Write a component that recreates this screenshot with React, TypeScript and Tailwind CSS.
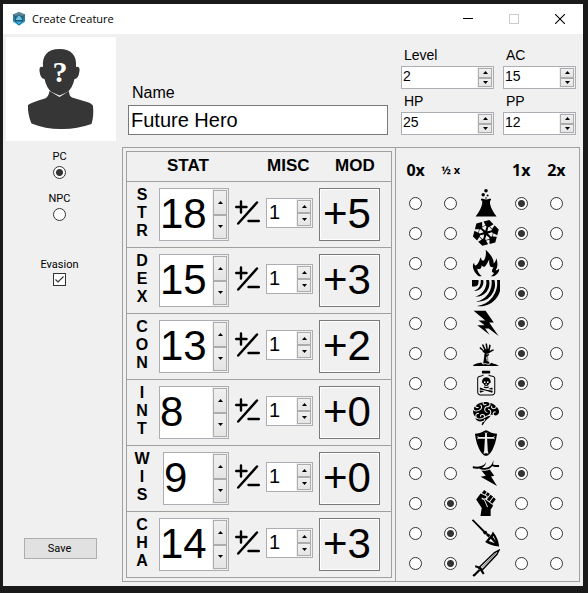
import { useState, type ComponentType, type ReactNode } from 'react'
import {
  GiSnowflake1,
  GiFlame,
  GiPowerLightning,
  GiRaiseZombie,
  GiPoisonBottle,
  GiBrain,
  GiTemplarShield,
  GiLightningStorm,
  GiFist,
} from 'react-icons/gi'

type IconType = ComponentType<{ className?: string }>

function AcidIcon({ className }: { className?: string }) {
  return (
    <svg viewBox="0 0 28 28" className={className} fill="currentColor">
      <circle cx="14" cy="1.8" r="1.8" />
      <circle cx="11.2" cy="5.8" r="1.7" />
      <circle cx="15.6" cy="6.4" r="1" />
      <circle cx="14" cy="9" r="0.8" />
      <path d="M9 9.8h2.2q3 1.6 6 0H19v1.6h-1v3.4c.8 4.4 3.6 8.6 6.6 12.8H3.6C6.6 23.4 9.4 19.2 10.2 14.8V11.4H9z" />
    </svg>
  )
}

function ForceIcon({ className }: { className?: string }) {
  return (
    <svg viewBox="0 0 28 28" className={className} fill="currentColor">
      <path d="M0 1h6.500v2q0 4-3.500 4.500H0z" />
      <path d="M11.200 1A9 9 0 0 1 2 12A10 10 0 0 0 8.800 1z" />
      <path d="M17 1A13 13 0 0 1 3 17.500A14.500 14.500 0 0 0 14.200 1z" />
      <path d="M22.400 1A17 17 0 0 1 4 22.500A19 19 0 0 0 19.500 1z" />
      <path d="M27.800 1A20.500 20.500 0 0 1 5 27A23 23 0 0 0 25 1z" />
    </svg>
  )
}

function SpearIcon({ className }: { className?: string }) {
  return (
    <svg viewBox="0 0 28 28" className={className} fill="currentColor">
      <path d="M0.500 0.800L12.500 13" stroke="currentColor" strokeWidth="1.800" />
      <circle cx="13.200" cy="13.600" r="1.900" />
      <path d="M15 14l3.500 2-2 2.500-2.500-2.500z" />
      <path d="M20.800 12.500q5.500 6.500 6.400 15-8.500-.8-14-4.500l4.400-5.500q2.500-2 3.200-5z" />
      <path d="M16.800 22l2-2.300 4 4.600zM20.800 18l.6-1.300 2.600 5.500z" fill="#f0f0f0" />
    </svg>
  )
}

function SwordIcon({ className }: { className?: string }) {
  return (
    <svg viewBox="0 0 28 28" className={className} fill="none" stroke="currentColor">
      <path d="M7.500 18L22.500 3.600 27 1.200 24.800 5.500 10.500 20.800z" strokeWidth="1.400" />
      <path d="M10 18.500L24 4.200" strokeWidth="0.600" />
      <path d="M3.200 17.200q3 .5 5 2.800t3.500 5" strokeWidth="2" />
      <path d="M7.500 21L2.500 26" strokeWidth="2.200" />
      <circle cx="2" cy="26.300" r="1.200" fill="currentColor" stroke="none" />
    </svg>
  )
}

function Portrait() {
  return (
    <svg viewBox="0 0 110 104" className="w-full bg-white" role="img" aria-label="Portrait">
      <g fill="#363636">
        <path d="M37 30C36 19 41 12 53.500 12S71 19 70 30q4-1 3.500 4-1 8-5 8-2 9-7 13l-8 3.500-8-3.500q-5-4-7-13-4 0-5-8-.5-5 3.500-4z" />
        <path d="M43.500 54l10 6 9.500-6q0 5 3 6.500l15 4.500q5 1.500 6 4 1 10-1.500 18-16 5.500-31 5-15 0-29-5.500-4-9-3.500-18.500 4-3 17-6.500 3.500-1.500 4.500-7.500z" />
      </g>
      <text
        x="54"
        y="45"
        textAnchor="middle"
        fill="#ffffff"
        className="font-['Liberation_Serif',serif] text-[30px] font-bold"
      >
        ?
      </text>
    </svg>
  )
}

function AppLogo() {
  return (
    <svg viewBox="0 0 14 14" className="size-[14px]">
      <path d="M7 0l6 2.600v6.800L7 13.600 1 9.400V2.600z" fill="#2b7ea3" />
      <path d="M7 0l6 2.600-2.500 2.200h-7L1 2.600z" fill="#5c8797" />
      <path d="M7 3l3.500 5h-7z" fill="#6cc3e4" />
      <path d="M1 9.400l6 4.200 6-4.200-3.500.6h-5z" fill="#35b6e6" />
      <path d="M1.500 2.800l2 2.200 3.500-2 3.500 2 2-2.200M3.500 5v4.500L7 13l3.500-3.500V5M3.500 8.500h7" fill="none" stroke="#1c4a63" strokeWidth="0.7" />
    </svg>
  )
}

function PlusMinus() {
  return (
    <svg
      viewBox="0 0 25 25"
      className="mb-1 size-[25px]"
      fill="none"
      stroke="#000"
      strokeWidth="2.400"
      strokeLinecap="round"
      aria-hidden="true"
    >
      <path d="M1.200 7H11.500M6 1.500v11M3.200 23.500L22 2.500M13.500 21h10.300" />
    </svg>
  )
}

function Arrow({ up = false }: { up?: boolean }) {
  return (
    <svg viewBox="0 0 5 3" className="h-[3px] w-[5px]" aria-hidden="true">
      <path d={up ? 'M2.500 0L5 3H0z' : 'M0 0h5L2.500 3z'} fill="#000" />
    </svg>
  )
}

interface SpinProps {
  id?: string
  label?: string
  initial: number
  size: string
  text: string
}

function Spin({ id, label, initial, size, text }: SpinProps) {
  const [value, setValue] = useState(String(initial))
  const step = (by: number) => setValue(String((parseInt(value, 10) || 0) + by))
  const button =
    'flex w-full flex-1 items-center justify-center border border-[#acacac] bg-linear-to-b from-[#f0f0f0] to-[#e5e5e5]'
  return (
    <div className={`flex border border-[#abadb3] bg-white ${size}`}>
      <input
        id={id}
        aria-label={label}
        inputMode="numeric"
        value={value}
        onChange={(e) => setValue(e.target.value)}
        className={`min-w-0 flex-1 outline-none ${text}`}
      />
      <div className="flex w-4 flex-none flex-col bg-[#f0f0f0] p-px">
        <button type="button" aria-label="Increase" className={button} onClick={() => step(1)}>
          <Arrow up />
        </button>
        <button type="button" aria-label="Decrease" className={button} onClick={() => step(-1)}>
          <Arrow />
        </button>
      </div>
    </div>
  )
}

function Radio({ id, name, label, checked }: { id?: string; name: string; label?: string; checked: boolean }) {
  return (
    <input
      id={id}
      type="radio"
      name={name}
      aria-label={label}
      defaultChecked={checked}
      className="size-[13px] appearance-none rounded-full border border-[#333] bg-white checked:bg-[radial-gradient(circle,#333_3px,#fff_4px)]"
    />
  )
}

function Field({ id, label, children }: { id: string; label: string; children: ReactNode }) {
  return (
    <div>
      <label htmlFor={id} className="block h-[23px] pt-0.5 pl-[3px] text-[14px] leading-5">
        {label}
      </label>
      {children}
    </div>
  )
}

const stats = [
  { name: 'STR', score: 18, mod: '+5' },
  { name: 'DEX', score: 15, mod: '+3' },
  { name: 'CON', score: 13, mod: '+2' },
  { name: 'INT', score: 8, mod: '+0' },
  { name: 'WIS', score: 9, mod: '+0', narrow: true },
  { name: 'CHA', score: 14, mod: '+3' },
]

const factors = ['0x', '½ x', '1x', '2x']

const damage: { name: string; Icon: IconType; factor: string }[] = [
  { name: 'Acid', Icon: AcidIcon, factor: '1x' },
  { name: 'Cold', Icon: GiSnowflake1, factor: '1x' },
  { name: 'Fire', Icon: GiFlame, factor: '1x' },
  { name: 'Force', Icon: ForceIcon, factor: '1x' },
  { name: 'Lightning', Icon: GiPowerLightning, factor: '1x' },
  { name: 'Necrotic', Icon: GiRaiseZombie, factor: '1x' },
  { name: 'Poison', Icon: GiPoisonBottle, factor: '1x' },
  { name: 'Psychic', Icon: GiBrain, factor: '1x' },
  { name: 'Radiant', Icon: GiTemplarShield, factor: '1x' },
  { name: 'Thunder', Icon: GiLightningStorm, factor: '1x' },
  { name: 'Bludgeoning', Icon: GiFist, factor: '½ x' },
  { name: 'Piercing', Icon: SpearIcon, factor: '½ x' },
  { name: 'Slashing', Icon: SwordIcon, factor: '½ x' },
]

function TitleBar() {
  const button = 'flex w-[46px] items-center justify-center'
  return (
    <header className="flex h-[30px] items-stretch bg-white">
      <div className="flex flex-1 items-center gap-[6px] pl-[9px]">
        <AppLogo />
        <h1 className="font-['Open_Sans',sans-serif] text-[11px]">Create Creature</h1>
      </div>
      <button type="button" aria-label="Minimize" className={button}>
        <svg viewBox="0 0 10 10" className="size-[10px]" shapeRendering="crispEdges">
          <path d="M0 4h10v1H0z" />
        </svg>
      </button>
      <button type="button" aria-label="Maximize" disabled className={button}>
        <span className="size-[10px] border border-[#ccc]" />
      </button>
      <button type="button" aria-label="Close" className={button}>
        <svg viewBox="0 0 10 10" className="size-[10px]" stroke="#000" strokeWidth="1.1">
          <path d="M0 0l10 10M10 0L0 10" />
        </svg>
      </button>
    </header>
  )
}

function Sidebar() {
  const label = "font-['Roboto',sans-serif] text-[11px] leading-4"
  return (
    <aside className="flex w-[113px] flex-none flex-col pt-[3px] pl-[3px]">
      <Portrait />
      <div className="flex flex-col items-center pt-2 pr-[3px]">
        <label htmlFor="pc" className={label}>PC</label>
        <div className="flex h-[26px] pt-px">
          <Radio id="pc" name="kind" checked />
        </div>
        <label htmlFor="npc" className={label}>NPC</label>
        <div className="flex h-[50px] pt-px">
          <Radio id="npc" name="kind" checked={false} />
        </div>
        <label htmlFor="evasion" className={label}>Evasion</label>
        <div className="grid">
          <input
            id="evasion"
            type="checkbox"
            defaultChecked
            className="peer col-start-1 row-start-1 size-[13px] appearance-none border border-[#333] bg-white"
          />
          <svg
            viewBox="0 0 13 13"
            className="pointer-events-none invisible col-start-1 row-start-1 size-[13px] peer-checked:visible"
            fill="none"
            stroke="#333"
            strokeWidth="1.2"
            aria-hidden="true"
          >
            <path d="M2.500 6.500L5 9l5.500-5.500" />
          </svg>
        </div>
      </div>
      <button
        type="button"
        className={`mt-auto mb-[27px] ml-[18px] h-[21px] w-[73px] border border-[#adadad] bg-[#e1e1e1] pr-0.5 ${label}`}
      >
        Save
      </button>
    </aside>
  )
}

function StatPanel() {
  return (
    <section className="m-[3px] border border-[#a0a0a0]">
      <div className="flex h-[29px] items-center pb-0.5 text-[17px] font-bold">
        <h2 className="w-[126px] pl-10">STAT</h2>
        <h2 className="w-[72px] pl-[14px]">MISC</h2>
        <h2 className="pl-[10px]">MOD</h2>
      </div>
      {stats.map((s) => (
        <div key={s.name} className="flex h-[66px] items-center gap-[6px] border-t border-[#a0a0a0] pr-[11px]">
          <h3 className="mb-1 -mr-1 flex w-[30px] flex-col items-center text-[16px] leading-[18px] font-bold">
            {s.name.split('').map((c) => (
              <span key={c}>{c}</span>
            ))}
          </h3>
          <div className="flex w-[70px] justify-end">
            <Spin
              label={`${s.name} score`}
              initial={s.score}
              size={s.narrow ? 'h-[53px] w-[66px]' : 'h-[53px] w-[70px]'}
              text="pb-0.5 text-[42px]"
            />
          </div>
          <PlusMinus />
          <Spin label={`${s.name} misc`} initial={1} size="mb-1 h-[30px] w-[47px]" text="pl-0.5 pb-px text-[20px]" />
          <output className="flex h-[53px] w-[61px] items-center border border-[#7a7a7a] pb-0.5 pl-[3px] text-[42px] leading-none outline -outline-offset-2 outline-white">
            {s.mod}
          </output>
        </div>
      ))}
    </section>
  )
}

function DamagePanel() {
  const cell = 'flex items-center justify-center'
  const radio = (name: string, factor: string, current: string) => (
    <div className={cell}>
      <Radio name={name} label={`${name} ${factor}`} checked={factor === current} />
    </div>
  )
  return (
    <section className="flex-1 border-l border-[#a0a0a0] pr-[5px] pl-[2px]">
      <div className="grid h-10 grid-cols-5 pt-1 font-['Open_Sans',sans-serif] text-[16px] font-bold whitespace-nowrap">
        <span className={cell}>{factors[0]}</span>
        <span className={`${cell} text-[11px]`}>{factors[1]}</span>
        <span />
        <span className={cell}>{factors[2]}</span>
        <span className={cell}>{factors[3]}</span>
      </div>
      {damage.map(({ name, Icon, factor }) => (
        <div key={name} className="grid h-[30px] grid-cols-5">
          {radio(name, factors[0], factor)}
          {radio(name, factors[1], factor)}
          <div className={cell}>
            <Icon className="size-7" />
          </div>
          {radio(name, factors[2], factor)}
          {radio(name, factors[3], factor)}
        </div>
      ))}
    </section>
  )
}

export default function App() {
  return (
    <div className="flex min-h-screen flex-col bg-[#1a1a1a] pt-1 pr-[5px] pb-[7px] pl-[3px] font-['Liberation_Sans',Arial,sans-serif] text-black">
      <TitleBar />
      <form className="flex flex-1 bg-[#f0f0f0]" onSubmit={(e) => e.preventDefault()}>
        <Sidebar />
        <main className="flex flex-1 flex-col pr-[3px] pb-[3px] pl-[6px]">
          <div className="flex h-[113px] pl-[6px]">
            <div className="mr-[13px] flex-1 pt-12">
              <label htmlFor="name" className="block h-[23px] pt-px pl-1 text-[16px] leading-5">
                Name
              </label>
              <input
                id="name"
                defaultValue="Future Hero"
                className="h-[30px] w-full border border-[#7a7a7a] bg-white px-0.5 text-[20px] outline-none"
              />
            </div>
            <div className="grid grid-cols-[93px_73px] content-start gap-x-[9px] pt-[9px] pr-1">
              <Field id="level" label="Level">
                <Spin id="level" initial={2} size="h-[23px]" text="pb-0.5 pl-px text-[14px]" />
              </Field>
              <Field id="ac" label="AC">
                <Spin id="ac" initial={15} size="h-[23px]" text="pb-0.5 pl-px text-[14px]" />
              </Field>
              <Field id="hp" label="HP">
                <Spin id="hp" initial={25} size="h-[23px]" text="pb-0.5 pl-px text-[14px]" />
              </Field>
              <Field id="pp" label="PP">
                <Spin id="pp" initial={12} size="h-[23px]" text="pb-0.5 pl-px text-[14px]" />
              </Field>
            </div>
          </div>
          <div className="flex border border-[#a0a0a0]">
            <StatPanel />
            <DamagePanel />
          </div>
        </main>
      </form>
    </div>
  )
}
